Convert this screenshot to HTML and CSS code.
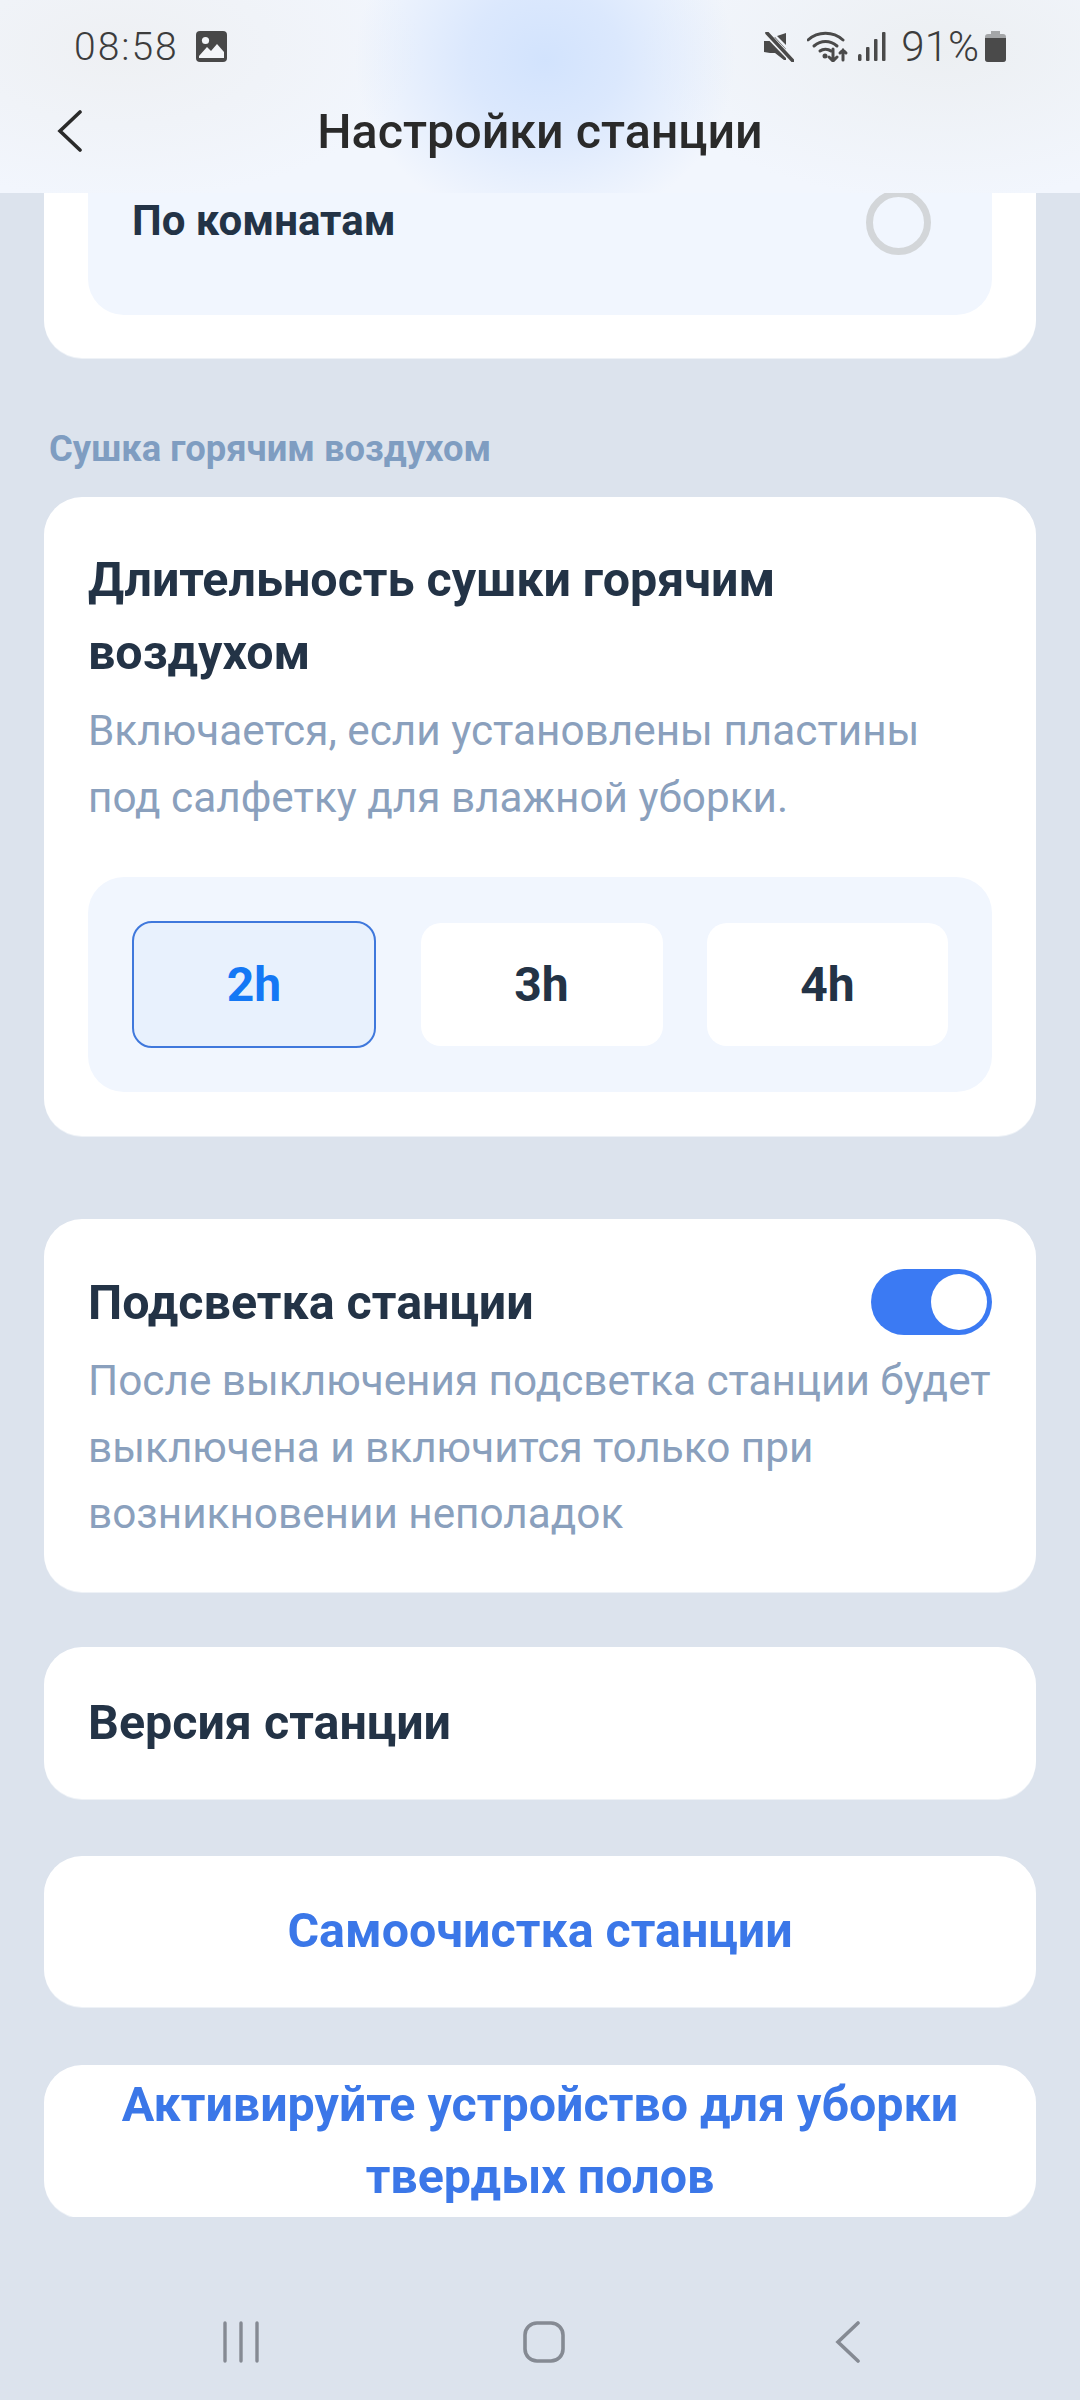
FILE: index.html
```html
<!DOCTYPE html>
<html lang="ru">
<head>
  <meta charset="UTF-8">
  <meta name="viewport" content="width=device-width, initial-scale=1.0">
  <title>Настройки станции</title>
  <link rel="stylesheet" href="styles.css">
</head>
<body>
  <header class="top">
    <div class="status">
      <div class="status-left">
        <span class="time">08:58</span>
        <svg class="ic-image" viewBox="0 0 31 31"><rect width="31" height="31" rx="4" fill="#484848"/><circle cx="9.5" cy="9.5" r="3.6" fill="#f3f5f8"/><path d="M3 25l8-9 4 4 6-7 7 8v6H3z" fill="#f3f5f8"/></svg>
      </div>
      <div class="status-right">
        <svg class="ic-mute" viewBox="0 0 30 30"><path d="M0 10h6l5-4 11 12v11l-2 0-9-7H6l-6-1z" fill="#4a4a4a" transform="translate(0 -1)"/><path d="M22 1v12L13 4z" fill="#4a4a4a"/><path d="M2 1l27 28" stroke="#f1f3f6" stroke-width="6"/><path d="M3 1l26 28" stroke="#4a4a4a" stroke-width="3.6" stroke-linecap="round"/></svg>
        <svg class="ic-wifi" viewBox="0 0 42 31"><g fill="none" stroke="#4a4a4a" stroke-width="3" stroke-linecap="round"><path d="M1 9c10-9 25-9 35 0"/><path d="M7 15c7-6 16-6 23 0"/><path d="M13 20c3-2.500 8-2.500 11 0"/><path d="M26 18v12M22 26l4 4 4-4"/><path d="M36 29v-10M33 22l3-3 3 3"/></g><circle cx="18" cy="25" r="2.500" fill="#4a4a4a"/></svg>
        <svg class="ic-signal" viewBox="0 0 28 29"><g fill="#4a4a4a"><rect x="0" y="22" width="3.500" height="7" rx="1.500"/><rect x="8" y="15" width="3.500" height="14" rx="1"/><rect x="16" y="7" width="3.500" height="22" rx="1"/><rect x="24" y="0" width="3.500" height="29" rx="1"/></g></svg>
        <span class="battery-pct">91%</span>
        <svg class="ic-battery" viewBox="0 0 21 31"><path d="M6 0h9v4H6z" fill="#a4a6a8"/><path d="M3 3h15a3 3 0 0 1 3 3v22a3 3 0 0 1-3 3H3a3 3 0 0 1-3-3V6a3 3 0 0 1 3-3z" fill="#a4a6a8"/><path d="M0 7h21v21a3 3 0 0 1-3 3H3a3 3 0 0 1-3-3z" fill="#4a4a4a"/></svg>
      </div>
    </div>
    <div class="titlebar">
      <svg class="ic-back" viewBox="0 0 26 42"><path d="M23 2L3 21l20 19" fill="none" stroke="#2a2a2a" stroke-width="3.600" stroke-linecap="round"/></svg>
      <h1>Настройки станции</h1>
    </div>
  </header>

  <main class="content">
    <section class="card card-cut">
      <div class="panel panel-room">
        <span class="room-label">По комнатам</span>
        <span class="radio"></span>
      </div>
    </section>

    <div class="section-label">Сушка горячим воздухом</div>

    <section class="card card-dry">
      <h2 class="card-title">Длительность сушки горячим воздухом</h2>
      <p class="card-desc">Включается, если установлены пластины под салфетку для влажной уборки.</p>
      <div class="panel panel-hours">
        <div class="hour active">2h</div>
        <div class="hour">3h</div>
        <div class="hour">4h</div>
      </div>
    </section>

    <section class="card card-light">
      <div class="card-row">
        <h2 class="card-title">Подсветка станции</h2>
        <span class="toggle"><span class="knob"></span></span>
      </div>
      <p class="card-desc">После выключения подсветка станции будет выключена и включится только при возникновении неполадок</p>
    </section>

    <section class="card card-version">
      <h2 class="card-title">Версия станции</h2>
    </section>

    <section class="card card-action card-clean">Самоочистка станции</section>

    <section class="card card-action card-activate">Активируйте устройство для уборки твердых полов</section>
  </main>

  <nav class="navbar">
    <svg class="ic-recent" viewBox="0 0 38 42"><path d="M3 2v38M19 2v38M35 2v38" stroke="#858a93" stroke-width="3.400" stroke-linecap="round"/></svg>
    <svg class="ic-home" viewBox="0 0 42 42"><rect x="2" y="2" width="38" height="38" rx="12" fill="none" stroke="#858a93" stroke-width="3.600"/></svg>
    <svg class="ic-navback" viewBox="0 0 26 42"><path d="M23 2L3 21l20 19" fill="none" stroke="#858a93" stroke-width="3.600" stroke-linecap="round"/></svg>
  </nav>
</body>
</html>
```

FILE: styles.css
```css
* {
  box-sizing: border-box;
}
body {
  margin: 0;
  width: 1080px;
  height: 2400px;
  overflow: hidden;
  display: flex;
  flex-direction: column;
  font-family: Roboto, "Noto Sans", sans-serif;
  background-color: #dce3ed;
}
.top {
  height: 193px;
  flex: none;
  background:
    radial-gradient(ellipse 190px 170px at 545px 60px, #d2e3fd 0%, #dbe8fd 40%, rgba(232, 240, 253, 0) 100%),
    radial-gradient(ellipse 300px 150px at 120px 50px, #eef0f3 0%, rgba(238, 240, 243, 0) 100%),
    radial-gradient(ellipse 300px 150px at 940px 50px, #eceff2 0%, rgba(236, 239, 242, 0) 100%),
    #f2f6fd;
}
.status {
  height: 92px;
  padding: 31px 74px 0 74px;
  display: flex;
  justify-content: space-between;
  align-items: flex-start;
}
.status-left, .status-right {
  display: flex;
  align-items: center;
  height: 31px;
}
.time {
  font-size: 39px;
  font-weight: 300;
  letter-spacing: 2px;
  color: #3c3c3c;
  margin-right: 17px;
}
.ic-image {
  width: 31px;
  height: 31px;
}
.ic-mute {
  width: 30px;
  height: 30px;
  margin-right: 13px;
}
.ic-wifi {
  width: 42px;
  height: 31px;
  margin-right: 9px;
}
.ic-signal {
  width: 28px;
  height: 29px;
  margin-right: 15px;
}
.battery-pct {
  font-size: 42px;
  font-weight: 300;
  color: #3c3c3c;
  margin-right: 6px;
}
.ic-battery {
  width: 21px;
  height: 31px;
}
.titlebar {
  height: 78px;
  position: relative;
  display: flex;
  align-items: center;
  justify-content: center;
}
.titlebar h1 {
  margin: 0;
  font-size: 48.4px;
  font-weight: 500;
  color: #2a2a2a;
}
.ic-back {
  position: absolute;
  left: 57px;
  top: 18px;
  width: 26px;
  height: 42px;
}
.content {
  flex: 1;
  overflow: hidden;
  padding: 0 44px;
}
.card {
  background-color: #fff;
  border-radius: 38px;
  box-shadow: 0 1px 0 #eef2f7;
}
.panel {
  background-color: #f1f6fe;
  border-radius: 36px;
}
.card-cut {
  margin-top: -60px;
  padding: 0 44px 43px;
}
.panel-room {
  display: flex;
  justify-content: space-between;
  align-items: center;
  padding: 57px 61px 60px 44px;
}
.room-label {
  margin-bottom: 4px;
  font-size: 42px;
  font-weight: 700;
  color: #233346;
}
.radio {
  width: 65px;
  height: 65px;
  border: 7px solid #d3d6d9;
  border-radius: 50%;
}
.section-label {
  margin: 71px 0 28px 5px;
  font-size: 36.4px;
  line-height: 40px;
  font-weight: 700;
  color: #7f9dc1;
}
.card-title {
  margin: 0;
  font-size: 48.4px;
  line-height: 73px;
  font-weight: 700;
  color: #233346;
}
.card-desc {
  margin: 0;
  font-size: 42.3px;
  line-height: 66.5px;
  color: #8aa0bd;
}
.card-dry {
  padding: 46px 44px 44px;
}
.card-dry .card-desc {
  margin: 9px 0 46px;
}
.panel-hours {
  padding: 44px;
  display: grid;
  grid-template-columns: 244px 242px 241px;
  column-gap: 44.5px;
  align-items: center;
}
.hour {
  height: 123px;
  border-radius: 20px;
  background-color: #fff;
  display: flex;
  align-items: center;
  justify-content: center;
  font-size: 48px;
  font-weight: 700;
  color: #233346;
}
.hour.active {
  height: 127px;
  background-color: #e8f1fd;
  border: 2px solid #3f78dc;
  color: #1478f5;
}
.card-light {
  margin-top: 83px;
  padding: 50px 44px 44px;
}
.card-row {
  display: flex;
  justify-content: space-between;
  align-items: center;
  height: 66px;
  margin-bottom: 13px;
}
.toggle {
  width: 121px;
  height: 66px;
  padding: 5px;
  border-radius: 33px;
  background-color: #3b7af3;
  display: flex;
  justify-content: flex-end;
}
.knob {
  width: 56px;
  height: 56px;
  border-radius: 50%;
  background-color: #fff;
}
.card-version {
  margin-top: 55px;
  height: 152px;
  padding: 0 44px;
  display: flex;
  align-items: center;
}
.card-action {
  padding: 0 60px;
  display: flex;
  align-items: center;
  justify-content: center;
  text-align: center;
  font-size: 48.4px;
  line-height: 72px;
  font-weight: 700;
  color: #3b77e8;
}
.card-clean {
  margin-top: 57px;
  height: 151px;
}
.card-activate {
  margin-top: 58px;
  height: 153px;
}
.navbar {
  height: 183px;
  flex: none;
  position: relative;
}
.navbar svg {
  position: absolute;
  top: 104px;
  height: 42px;
}
.ic-recent {
  left: 222px;
  width: 38px;
}
.ic-home {
  left: 523px;
  width: 42px;
}
.ic-navback {
  left: 835px;
  width: 26px;
}
```
